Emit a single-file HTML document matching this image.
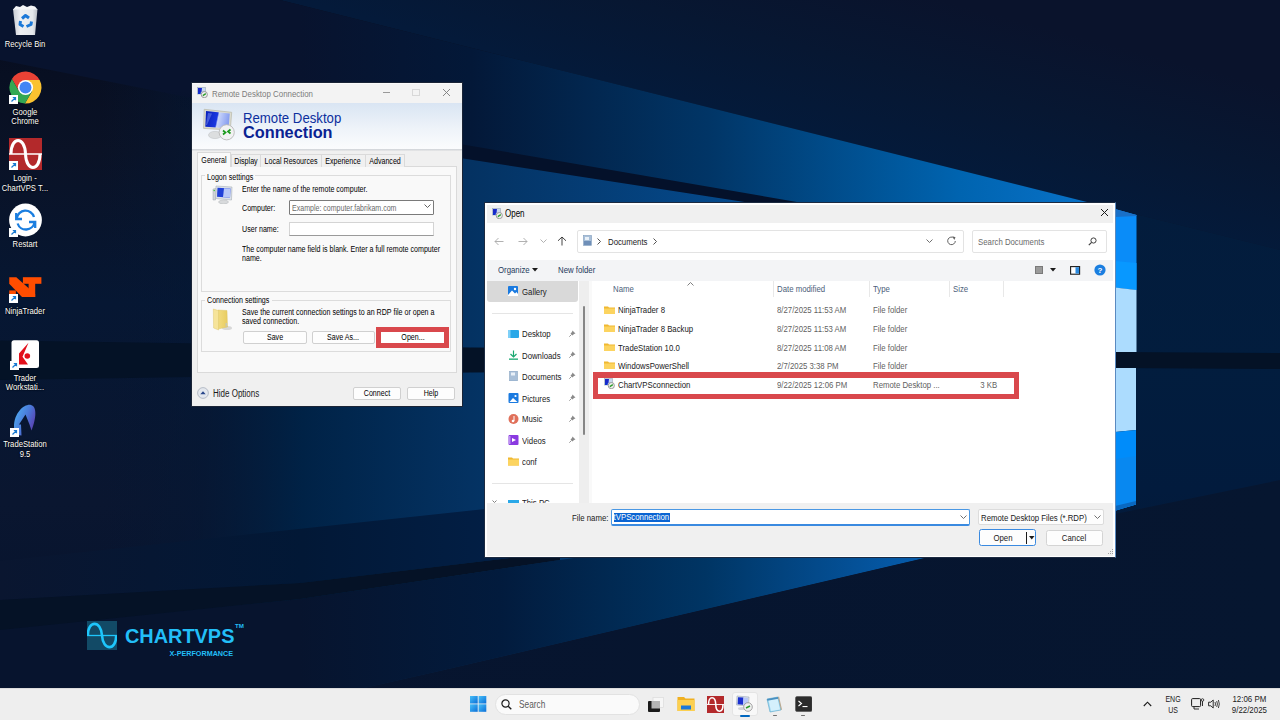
<!DOCTYPE html>
<html><head><meta charset="utf-8"><style>
html,body{margin:0;padding:0;width:1280px;height:720px;overflow:hidden;background:#08122a;}
body{position:relative;font-family:"Liberation Sans",sans-serif;}
.t{position:absolute;white-space:nowrap;}
.r{position:absolute;box-sizing:border-box;}
.dl{color:#fff;text-shadow:0 0 2px #000,0 1px 1px #000;text-align:center;width:56px;}
</style></head><body>

<svg class="r" style="left:0;top:0" width="1280" height="720" viewBox="0 0 1280 720">
<defs>
<linearGradient id="gBase" x1="0" y1="0" x2="0" y2="1">
 <stop offset="0" stop-color="#060c1e"/><stop offset="0.21" stop-color="#0a1226"/><stop offset="0.42" stop-color="#061733"/><stop offset="0.7" stop-color="#0a1630"/><stop offset="0.86" stop-color="#07142e"/><stop offset="1" stop-color="#061630"/>
</linearGradient>
<linearGradient id="gUp" gradientUnits="userSpaceOnUse" x1="300" y1="0" x2="1115" y2="0">
 <stop offset="0" stop-color="#08132e"/><stop offset="0.21" stop-color="#031838"/><stop offset="0.5" stop-color="#013566"/><stop offset="0.81" stop-color="#0064b0"/><stop offset="1" stop-color="#0a74cc"/>
</linearGradient>
<linearGradient id="gMid" gradientUnits="userSpaceOnUse" x1="100" y1="0" x2="1115" y2="0">
 <stop offset="0" stop-color="#061733" stop-opacity="0"/><stop offset="0.1" stop-color="#051835" stop-opacity="0.6"/><stop offset="0.2" stop-color="#002246"/><stop offset="0.365" stop-color="#043262"/><stop offset="0.78" stop-color="#0558a5"/><stop offset="1" stop-color="#0a6cc0"/>
</linearGradient>
<linearGradient id="gRight" x1="0" y1="0" x2="0" y2="1">
 <stop offset="0" stop-color="#031c3c"/><stop offset="0.3" stop-color="#021d3e"/><stop offset="0.55" stop-color="#021b3d"/><stop offset="1" stop-color="#061630"/>
</linearGradient>
<linearGradient id="gBB2" gradientUnits="userSpaceOnUse" x1="0" y1="0" x2="560" y2="0">
 <stop offset="0" stop-color="#0a1630"/><stop offset="0.54" stop-color="#021836"/><stop offset="1" stop-color="#02214a"/>
</linearGradient>
<linearGradient id="gLow" gradientUnits="userSpaceOnUse" x1="300" y1="0" x2="1000" y2="0">
 <stop offset="0" stop-color="#07142e"/><stop offset="0.286" stop-color="#021b3d"/><stop offset="0.58" stop-color="#003564"/><stop offset="0.85" stop-color="#0558a5"/><stop offset="1" stop-color="#0a64b8"/>
</linearGradient>
<linearGradient id="gBot" x1="0" y1="0" x2="1" y2="0">
 <stop offset="0" stop-color="#07142e"/><stop offset="1" stop-color="#061630"/>
</linearGradient>
<linearGradient id="gS1" gradientUnits="userSpaceOnUse" x1="150" y1="0" x2="460" y2="0">
 <stop offset="0" stop-color="#04112a" stop-opacity="0"/><stop offset="1" stop-color="#04112a" stop-opacity="1"/>
</linearGradient>
<linearGradient id="gAbove" gradientUnits="userSpaceOnUse" x1="900" y1="155" x2="940" y2="0">
 <stop offset="0" stop-color="#041a3a"/><stop offset="0.5" stop-color="#071732"/><stop offset="1" stop-color="#0a132c"/>
</linearGradient>
</defs>
<rect x="0" y="0" width="1280" height="720" fill="url(#gBase)"/>
<!-- above T line tint -->
<polygon points="280,0 1280,0 1280,250 1115,209" fill="url(#gAbove)"/>
<!-- right area below T line -->
<polygon points="1115,209 1280,250 1280,720 1115,720" fill="url(#gRight)"/>
<!-- middle + lower beam -->
<polygon points="0,40 460,151 1115,258 1115,514 929,557 440,671 0,770" fill="url(#gMid)"/>
<!-- upper beam -->
<polygon points="280,0 1115,209 1115,258 460,151 0,60 0,0" fill="url(#gUp)"/>
<!-- stripe 1 -->
<polygon points="0,58 460,144 1115,256.7 1115,259.5 460,158 0,75" fill="url(#gS1)"/>
<!-- region between B and B2 (left) -->
<polygon points="0,561 485,509 560,500 560,552 300,583 0,600" fill="url(#gBB2)"/>
<!-- region below B2 above B3 -->
<polygon points="0,630 300,599 560,560 1115,480 1115,514 929,557 440,671 0,770" fill="url(#gLow)"/>
<!-- B2 dark stripe -->
<polygon points="0,600 300,583 560,552 560,560 300,599 0,630" fill="#051226"/>
<!-- below B3 -->
<polygon points="440,671 929,557 1115,514 1280,480 1280,720 0,720 0,770" fill="url(#gBot)"/>
<!-- stripe 2 (window bar shadow) -->
<polygon points="0,340.5 470,347.5 1115,352 1280,353 1280,369 1115,368 470,372.5 0,380" fill="#041226"/>
<!-- window panes right column -->
<polygon points="1115,209 1136.5,215 1136.5,290 1115,287.5" fill="#0a8cf8"/>
<polygon points="1115,209 1136.5,215 1136.5,216 1115,217" fill="#1a70c8"/>
<polygon points="1115,261 1136.5,263 1136.5,290 1115,287.5" fill="#0898ff"/>
<polygon points="1115,287.5 1136.5,290 1136.5,352 1115,352" fill="#acdcfe"/>
<polygon points="1115,368 1136,368 1136,430 1115,432" fill="#acdcfe"/>
<polygon points="1115,432 1136,430 1136,504.5 1115,510.7" fill="#008cfa"/>
<polygon points="1115,459 1136,456 1136,504.5 1115,510.7" fill="#0888f0"/>
<polygon points="1115,506 1136,501 1136,504.5 1115,510.7" fill="#0a68c0"/>
</svg>

<svg class="r" style="left:8px;top:2px;" width="36" height="36" viewBox="0 0 36 36"><defs><linearGradient id="gbin" x1="0" y1="0" x2="1" y2="0"><stop offset="0" stop-color="#c8ccd2"/><stop offset="0.3" stop-color="#eef0f3"/><stop offset="0.8" stop-color="#e4e8ec"/><stop offset="1" stop-color="#b8bcc4"/></linearGradient></defs>
<path d="M5 7 L29.5 7 L27 33 L8 33Z" fill="url(#gbin)"/>
<path d="M5 7.5 L8 4 L12 5 L15 3 L19 5 L23 3.5 L27 4.5 L29.5 7.5Z" fill="#f4f6f8"/>
<g fill="none" stroke="#1a78d8" stroke-width="3" stroke-linejoin="round"><path d="M14 16.5 L17.5 13.5 L21 16"/><path d="M12.5 19 L12 22.5 L15.5 24.5"/><path d="M18.5 24.5 L23 22.5 L23.5 19.5"/></g></svg>
<div class="t" style="left:25px;transform:translateX(-50%) scaleX(0.8000);transform-origin:50% 50%;top:39.45px;font-size:9.62px;line-height:9.62px;color:#fff;font-weight:400;text-shadow:0 0 2px #000,0 0 1px #000;">Recycle Bin</div>
<svg class="r" style="left:9px;top:71px;" width="33" height="33" viewBox="0 0 33 33"><path d="M2.94 8.01 A16 16 0 0 1 30.63 9 L16.5 9 L16.5 16.5 L10 20.25 Z" fill="#e94235"/>
<path d="M30.63 9 A16 16 0 0 1 15.93 32.49 L23 20.25 L16.5 16.5 L16.5 9 Z" fill="#fac230"/>
<path d="M15.93 32.49 A16 16 0 0 1 2.94 8.01 L10 20.25 L16.5 16.5 L23 20.25 Z" fill="#34a853"/>
<circle cx="16.5" cy="16.5" r="7.6" fill="#fff"/><circle cx="16.5" cy="16.5" r="6" fill="#4285f4"/></svg>
<svg class="r" style="left:9px;top:95px;" width="9" height="9" viewBox="0 0 9 9"><rect x="0" y="0" width="9" height="9" fill="#fff"/><path d="M2.5 6.5 L6.5 2.5 M3.8 2.5 H6.5 V5.2" stroke="#1a7ad0" stroke-width="1.2" fill="none"/></svg>
<div class="t" style="left:25px;transform:translateX(-50%) scaleX(0.8000);transform-origin:50% 50%;top:106.85px;font-size:9.62px;line-height:9.62px;color:#fff;font-weight:400;text-shadow:0 0 2px #000,0 0 1px #000;">Google</div>
<div class="t" style="left:25px;transform:translateX(-50%) scaleX(0.8000);transform-origin:50% 50%;top:115.65px;font-size:9.62px;line-height:9.62px;color:#fff;font-weight:400;text-shadow:0 0 2px #000,0 0 1px #000;">Chrome</div>
<svg class="r" style="left:9px;top:138px;" width="33" height="32" viewBox="0 0 33 32"><rect width="33" height="32" fill="#b3292b"/>
<path d="M2 16 C2 -2 16 -2 16.5 16 C17 34 31 34 31 16" stroke="#fff" stroke-width="3" fill="none"/>
<line x1="0" y1="16" x2="33" y2="16" stroke="#fff" stroke-width="1.6"/></svg>
<svg class="r" style="left:9px;top:161px;" width="9" height="9" viewBox="0 0 9 9"><rect x="0" y="0" width="9" height="9" fill="#fff"/><path d="M2.5 6.5 L6.5 2.5 M3.8 2.5 H6.5 V5.2" stroke="#1a7ad0" stroke-width="1.2" fill="none"/></svg>
<div class="t" style="left:25px;transform:translateX(-50%) scaleX(0.8000);transform-origin:50% 50%;top:173.45px;font-size:9.62px;line-height:9.62px;color:#fff;font-weight:400;text-shadow:0 0 2px #000,0 0 1px #000;">Login -</div>
<div class="t" style="left:25px;transform:translateX(-50%) scaleX(0.8000);transform-origin:50% 50%;top:183.35px;font-size:9.62px;line-height:9.62px;color:#fff;font-weight:400;text-shadow:0 0 2px #000,0 0 1px #000;">ChartVPS T...</div>
<svg class="r" style="left:5px;top:200px;" width="40" height="40" viewBox="0 0 40 40"><circle cx="20.5" cy="20" r="16.4" fill="#fff"/>
<g stroke="#1a7ee0" stroke-width="2.3" fill="none"><path d="M11.8 18.5 A8.8 8.8 0 0 1 29 17"/><path d="M11.2 13 V19 H17"/><path d="M12.6 23.5 A8.8 8.8 0 0 0 29.6 22.3"/><path d="M24 22 H30.2 V28"/></g></svg>
<svg class="r" style="left:9px;top:228px;" width="9" height="9" viewBox="0 0 9 9"><rect x="0" y="0" width="9" height="9" fill="#fff"/><path d="M2.5 6.5 L6.5 2.5 M3.8 2.5 H6.5 V5.2" stroke="#1a7ad0" stroke-width="1.2" fill="none"/></svg>
<div class="t" style="left:25px;transform:translateX(-50%) scaleX(0.8000);transform-origin:50% 50%;top:239.35px;font-size:9.62px;line-height:9.62px;color:#fff;font-weight:400;text-shadow:0 0 2px #000,0 0 1px #000;">Restart</div>
<svg class="r" style="left:5px;top:272px;" width="40" height="34" viewBox="0 0 40 34"><g fill="#ff4d00"><path d="M4.25 5.2 L11.3 5.2 L30.2 21.9 L30.2 25 L17 25 L4.25 11.8Z"/><rect x="17.9" y="5.2" width="18.5" height="6.6"/><rect x="23.6" y="11" width="6.6" height="14"/><rect x="4.25" y="18.4" width="6.6" height="3.8"/></g></svg>
<svg class="r" style="left:9px;top:294px;" width="9" height="9" viewBox="0 0 9 9"><rect x="0" y="0" width="9" height="9" fill="#fff"/><path d="M2.5 6.5 L6.5 2.5 M3.8 2.5 H6.5 V5.2" stroke="#1a7ad0" stroke-width="1.2" fill="none"/></svg>
<div class="t" style="left:25px;transform:translateX(-50%) scaleX(0.8000);transform-origin:50% 50%;top:306.15px;font-size:9.62px;line-height:9.62px;color:#fff;font-weight:400;text-shadow:0 0 2px #000,0 0 1px #000;">NinjaTrader</div>
<svg class="r" style="left:5px;top:336px;" width="40" height="36" viewBox="0 0 40 36"><rect x="6.5" y="4.25" width="27.5" height="27.75" rx="2.5" fill="#fff"/>
<path d="M23.5 6.75 L14 17.5 L14 28.5 L23 28.5 L17.5 20.75Z" fill="#e2101c"/><circle cx="22.3" cy="20" r="3.4" fill="#fff"/><circle cx="22.3" cy="20" r="2.8" fill="#e2101c"/></svg>
<svg class="r" style="left:9.5px;top:361px;" width="9" height="9" viewBox="0 0 9 9"><rect x="0" y="0" width="9" height="9" fill="#fff"/><path d="M2.5 6.5 L6.5 2.5 M3.8 2.5 H6.5 V5.2" stroke="#1a7ad0" stroke-width="1.2" fill="none"/></svg>
<div class="t" style="left:25px;transform:translateX(-50%) scaleX(0.8000);transform-origin:50% 50%;top:372.85px;font-size:9.62px;line-height:9.62px;color:#fff;font-weight:400;text-shadow:0 0 2px #000,0 0 1px #000;">Trader</div>
<div class="t" style="left:25px;transform:translateX(-50%) scaleX(0.8000);transform-origin:50% 50%;top:382.25px;font-size:9.62px;line-height:9.62px;color:#fff;font-weight:400;text-shadow:0 0 2px #000,0 0 1px #000;">Workstati...</div>
<svg class="r" style="left:5px;top:400px;" width="40" height="40" viewBox="0 0 40 40"><defs><linearGradient id="gts" x1="0" y1="0" x2="1" y2="0.6"><stop offset="0" stop-color="#50b8f8"/><stop offset="0.6" stop-color="#4a78d8"/><stop offset="1" stop-color="#5a40b0"/></linearGradient></defs>
<path d="M9 27 C9 12 20 3.5 26 5 C32 6.5 31.5 18 26.5 30.5 L24.5 24.5 L20.5 14.5 L14 24.5 L16 24.5 L16.5 35.5 L12.5 35 C10 33 9 30 9 27Z" fill="url(#gts)"/></svg>
<svg class="r" style="left:9.5px;top:428px;" width="9" height="9" viewBox="0 0 9 9"><rect x="0" y="0" width="9" height="9" fill="#fff"/><path d="M2.5 6.5 L6.5 2.5 M3.8 2.5 H6.5 V5.2" stroke="#1a7ad0" stroke-width="1.2" fill="none"/></svg>
<div class="t" style="left:25px;transform:translateX(-50%) scaleX(0.8000);transform-origin:50% 50%;top:439.15px;font-size:9.62px;line-height:9.62px;color:#fff;font-weight:400;text-shadow:0 0 2px #000,0 0 1px #000;">TradeStation</div>
<div class="t" style="left:25px;transform:translateX(-50%) scaleX(0.8000);transform-origin:50% 50%;top:449.15px;font-size:9.62px;line-height:9.62px;color:#fff;font-weight:400;text-shadow:0 0 2px #000,0 0 1px #000;">9.5</div>
<svg class="r" style="left:87px;top:621px;" width="30" height="29" viewBox="0 0 30 29"><rect width="30" height="29" fill="#124a66"/>
<path d="M0.8 14.5 C0.8 -1 14 -1 15 14.5 C16 30 29.2 30 29.2 14.5" stroke="#1ec6fc" stroke-width="2.6" fill="none"/>
<line x1="0" y1="14.5" x2="30" y2="14.5" stroke="#1ec6fc" stroke-width="1.3"/></svg>
<div class="t" style="left:125px;transform:scaleX(1.0000);transform-origin:0 50%;top:627.15px;font-size:19.90px;line-height:19.90px;color:#22bff8;font-weight:700;">CHARTVPS</div>
<div class="t" style="left:235px;transform:scaleX(1.0000);transform-origin:0 50%;top:623.25px;font-size:6.20px;line-height:6.20px;color:#22bff8;font-weight:700;">TM</div>
<div class="t" style="left:169.5px;transform:scaleX(1.0000);transform-origin:0 50%;top:650.41px;font-size:7.20px;line-height:7.20px;color:#22bff8;font-weight:700;">X-PERFORMANCE</div>
<div class="r" style="left:191px;top:82px;width:272px;height:325px;background:#f0f0f0;border:1px solid #1a2436;"></div>
<div class="r" style="left:192px;top:83px;width:270px;height:20px;background:#f3f3f3;border-top:1px solid #fafafa;"></div>
<svg class="r" style="left:197px;top:87px;" width="11" height="11" viewBox="0 0 11 11"><rect x="0.5" y="0.5" width="8" height="6.5" fill="#c8d8f0" stroke="#9aa8b8" stroke-width="0.6"/>
<path d="M1 1 H5 L3.5 7 H1Z" fill="#1030d0"/><rect x="1" y="1" width="3.5" height="4" fill="#1a28c8"/>
<circle cx="7.3" cy="7.6" r="3.1" fill="#f0f0f0" stroke="#888" stroke-width="0.8"/><path d="M5.8 8.6 L8.8 6.6" stroke="#2a9a2a" stroke-width="1.4"/></svg>
<div class="t" style="left:211.5px;transform:scaleX(0.8000);transform-origin:0 50%;top:88.84px;font-size:9.88px;line-height:9.88px;color:#7c7c7c;font-weight:400;">Remote Desktop Connection</div>
<div class="r" style="left:382.5px;top:92.3px;width:7.0px;height:1.0px;background:#9a9a9a;"></div>
<div class="r" style="left:412px;top:89px;width:8px;height:7px;border:1px solid #d8d8d8;"></div>
<svg class="r" style="left:442px;top:88px;" width="9" height="9" viewBox="0 0 9 9"><path d="M1 1 L8 8 M8 1 L1 8" stroke="#7a7a7a" stroke-width="0.9"/></svg>
<div class="r" style="left:192px;top:103px;width:270px;height:46px;background:linear-gradient(#d9e5f3,#eef3f9 55%,#fbfcfd);"></div>
<div class="r" style="left:192px;top:149px;width:270px;height:2px;background:linear-gradient(#cfd3d8,#e8e8e8);"></div>
<svg class="r" style="left:200px;top:104px;" width="40" height="40" viewBox="0 0 40 40"><defs><linearGradient id="gscr" x1="0" y1="0" x2="1" y2="0.15"><stop offset="0" stop-color="#0a20b8"/><stop offset="0.52" stop-color="#1a38e0"/><stop offset="0.58" stop-color="#c8d4fa"/><stop offset="1" stop-color="#8aa0f0"/></linearGradient></defs>
<ellipse cx="15" cy="31" rx="6.5" ry="3.6" fill="#dcdedf" stroke="#c0c2c4" stroke-width="0.6"/>
<path d="M4.2 5.3 L31.7 8.3 L30.3 26 L3.6 24.4 Z" fill="#dcdcd0" stroke="#b8b8a8" stroke-width="0.7"/>
<path d="M6 7 L29.8 9.6 L28.6 24.3 L5.3 22.8 Z" fill="url(#gscr)"/>
<path d="M8 9 L12 9.5 L7 21 L6 21Z" fill="#6a80e8" opacity="0.6"/>
<circle cx="26.7" cy="28.3" r="7.6" fill="#f2f2f2" stroke="#b8b8b8" stroke-width="0.9"/>
<path d="M23 26.5 L25.5 28.5 L23 30.5" stroke="#1a9a1a" stroke-width="1.7" fill="none"/><path d="M30.5 25.5 L28 27.5 L30.5 29.5" stroke="#1a9a1a" stroke-width="1.7" fill="none"/></svg>
<div class="t" style="left:243px;transform:scaleX(0.9259);transform-origin:0 50%;top:111.13px;font-size:14.26px;line-height:14.26px;color:#0c2f9e;font-weight:400;">Remote Desktop</div>
<div class="t" style="left:243px;transform:scaleX(1.0000);transform-origin:0 50%;top:124.40px;font-size:16.30px;line-height:16.30px;color:#0a2292;font-weight:700;">Connection</div>
<div class="r" style="left:197px;top:166px;width:260px;height:207px;background:#f9f9f9;border:1px solid #dadada;"></div>
<div class="r" style="left:230.5px;top:154px;width:30.5px;height:13px;background:#f0f0f0;border:1px solid #dadada;border-bottom:none;"></div>
<div class="t" style="left:245.75px;transform:translateX(-50%) scaleX(0.8000);transform-origin:50% 50%;top:156.69px;font-size:8.88px;line-height:8.88px;color:#000;font-weight:400;">Display</div>
<div class="r" style="left:260px;top:154px;width:62px;height:13px;background:#f0f0f0;border:1px solid #dadada;border-bottom:none;"></div>
<div class="t" style="left:291.0px;transform:translateX(-50%) scaleX(0.8000);transform-origin:50% 50%;top:156.69px;font-size:8.88px;line-height:8.88px;color:#000;font-weight:400;">Local Resources</div>
<div class="r" style="left:321px;top:154px;width:44.5px;height:13px;background:#f0f0f0;border:1px solid #dadada;border-bottom:none;"></div>
<div class="t" style="left:343.25px;transform:translateX(-50%) scaleX(0.8000);transform-origin:50% 50%;top:156.69px;font-size:8.88px;line-height:8.88px;color:#000;font-weight:400;">Experience</div>
<div class="r" style="left:364.5px;top:154px;width:40.5px;height:13px;background:#f0f0f0;border:1px solid #dadada;border-bottom:none;"></div>
<div class="t" style="left:384.75px;transform:translateX(-50%) scaleX(0.8000);transform-origin:50% 50%;top:156.69px;font-size:8.88px;line-height:8.88px;color:#000;font-weight:400;">Advanced</div>
<div class="r" style="left:197px;top:152px;width:34px;height:15px;background:#f9f9f9;border:1px solid #dadada;border-bottom:none;"></div>
<div class="t" style="left:214px;transform:translateX(-50%) scaleX(0.8000);transform-origin:50% 50%;top:155.69px;font-size:8.88px;line-height:8.88px;color:#000;font-weight:400;">General</div>
<div class="r" style="left:201px;top:175px;width:250px;height:117px;border:1px solid #dcdcdc;"></div>
<div class="r" style="left:205px;top:171px;width:50px;height:7px;background:#f9f9f9;"></div>
<div class="t" style="left:206.5px;transform:scaleX(0.8000);transform-origin:0 50%;top:172.69px;font-size:8.88px;line-height:8.88px;color:#000;font-weight:400;">Logon settings</div>
<svg class="r" style="left:212px;top:185px;" width="21" height="19" viewBox="0 0 21 19"><path d="M4 1 L20 2 L19.5 15 L3.5 13.5 Z" fill="#dde2e8" stroke="#a8b0b8" stroke-width="0.6"/>
<path d="M5.5 2.8 L18.5 3.6 L18 12.8 L5 11.8 Z" fill="#2040d8"/><path d="M12 3.3 L18.5 3.6 L18 12.8 L11 12.2Z" fill="#b8c8f8"/>
<path d="M1 4 L4 3.5 L3.5 15 L1 15Z" fill="#d0d4d8" stroke="#a0a8b0" stroke-width="0.5"/><circle cx="2.2" cy="5.5" r="0.7" fill="#30c030"/>
<ellipse cx="11.5" cy="17" rx="5" ry="1.8" fill="#d8dadc" stroke="#b0b4b8" stroke-width="0.5"/></svg>
<div class="t" style="left:242px;transform:scaleX(0.8000);transform-origin:0 50%;top:185.39px;font-size:8.88px;line-height:8.88px;color:#000;font-weight:400;">Enter the name of the remote computer.</div>
<div class="t" style="left:242px;transform:scaleX(0.8000);transform-origin:0 50%;top:204.19px;font-size:8.88px;line-height:8.88px;color:#000;font-weight:400;">Computer:</div>
<div class="r" style="left:288.5px;top:200px;width:145.5px;height:14.5px;background:#fff;border:1px solid #7a7a7a;border-radius:1px;"></div>
<div class="t" style="left:291.5px;transform:scaleX(0.8000);transform-origin:0 50%;top:204.04px;font-size:8.81px;line-height:8.81px;color:#6a6a6a;font-weight:400;">Example: computer.fabrikam.com</div>
<svg class="r" style="left:424px;top:204px;" width="7" height="5" viewBox="0 0 7 5"><path d="M0.5 0.5 L3.5 3.5 L6.5 0.5" stroke="#505050" stroke-width="0.9" fill="none"/></svg>
<div class="t" style="left:242px;transform:scaleX(0.8000);transform-origin:0 50%;top:225.19px;font-size:8.88px;line-height:8.88px;color:#000;font-weight:400;">User name:</div>
<div class="r" style="left:289px;top:222px;width:145px;height:14px;background:#fff;border:1px solid #d4d4d4;border-bottom-color:#9a9a9a;"></div>
<div class="t" style="left:242px;transform:scaleX(0.8000);transform-origin:0 50%;top:245.09px;font-size:8.88px;line-height:8.88px;color:#000;font-weight:400;">The computer name field is blank. Enter a full remote computer</div>
<div class="t" style="left:242px;transform:scaleX(0.8000);transform-origin:0 50%;top:253.59px;font-size:8.88px;line-height:8.88px;color:#000;font-weight:400;">name.</div>
<div class="r" style="left:201px;top:300px;width:250px;height:51.5px;border:1px solid #dcdcdc;"></div>
<div class="r" style="left:205px;top:296px;width:67px;height:7px;background:#f9f9f9;"></div>
<div class="t" style="left:206.5px;transform:scaleX(0.8000);transform-origin:0 50%;top:296.39px;font-size:8.88px;line-height:8.88px;color:#000;font-weight:400;">Connection settings</div>
<svg class="r" style="left:210px;top:306px;" width="24" height="26" viewBox="0 0 24 26"><defs><linearGradient id="gfold" x1="0" y1="0" x2="1" y2="0"><stop offset="0" stop-color="#f2dc80"/><stop offset="1" stop-color="#e8cc60"/></linearGradient></defs>
<ellipse cx="17" cy="22" rx="5" ry="2" fill="#b8b8b8" opacity="0.5"/>
<path d="M8 4 L17 4.5 L17.5 21 L8 23Z" fill="url(#gfold)" stroke="#d8c060" stroke-width="0.4"/>
<path d="M3.3 3 L8.6 4.6 L8.6 24 L3.6 22Z" fill="#f6e49a" stroke="#d8c060" stroke-width="0.4"/>
<rect x="15.5" y="17" width="1.6" height="3.5" fill="#c8c8b0"/></svg>
<div class="t" style="left:242px;transform:scaleX(0.8000);transform-origin:0 50%;top:308.39px;font-size:8.88px;line-height:8.88px;color:#000;font-weight:400;">Save the current connection settings to an RDP file or open a</div>
<div class="t" style="left:242px;transform:scaleX(0.8000);transform-origin:0 50%;top:317.19px;font-size:8.88px;line-height:8.88px;color:#000;font-weight:400;">saved connection.</div>
<div class="r" style="left:242.5px;top:330.5px;width:64.5px;height:13.5px;background:#fdfdfd;border:1px solid #d0d0d0;border-radius:2px;"></div>
<div class="t" style="left:274.75px;transform:translateX(-50%) scaleX(0.8000);transform-origin:50% 50%;top:332.89px;font-size:8.88px;line-height:8.88px;color:#000;font-weight:400;">Save</div>
<div class="r" style="left:311.5px;top:330.5px;width:63.5px;height:13.5px;background:#fdfdfd;border:1px solid #d0d0d0;border-radius:2px;"></div>
<div class="t" style="left:343.25px;transform:translateX(-50%) scaleX(0.8000);transform-origin:50% 50%;top:332.89px;font-size:8.88px;line-height:8.88px;color:#000;font-weight:400;">Save As...</div>
<div class="r" style="left:375.8px;top:327px;width:73.5px;height:21.30000000000001px;background:#d9484c;"></div>
<div class="r" style="left:381px;top:332.3px;width:63px;height:10.899999999999977px;background:#fff;"></div>
<div class="t" style="left:412.5px;transform:translateX(-50%) scaleX(0.8000);transform-origin:50% 50%;top:332.89px;font-size:8.88px;line-height:8.88px;color:#000;font-weight:400;">Open...</div>
<svg class="r" style="left:197px;top:387px;" width="12" height="12" viewBox="0 0 12 12"><circle cx="6" cy="6" r="5.4" fill="#e4e8ee" stroke="#a8b0bc" stroke-width="0.8"/><path d="M3.3 7.3 L6 4.3 L8.7 7.3Z" fill="#28468a"/></svg>
<div class="t" style="left:213px;transform:scaleX(0.8000);transform-origin:0 50%;top:388.74px;font-size:10.00px;line-height:10.00px;color:#1a1a1a;font-weight:400;">Hide Options</div>
<div class="r" style="left:352.5px;top:386.5px;width:48.0px;height:13.5px;background:#fdfdfd;border:1px solid #d0d0d0;border-radius:2px;"></div>
<div class="t" style="left:376.5px;transform:translateX(-50%) scaleX(0.8000);transform-origin:50% 50%;top:389.19px;font-size:8.88px;line-height:8.88px;color:#000;font-weight:400;">Connect</div>
<div class="r" style="left:406.5px;top:386.5px;width:48.0px;height:13.5px;background:#fdfdfd;border:1px solid #d0d0d0;border-radius:2px;"></div>
<div class="t" style="left:430.5px;transform:translateX(-50%) scaleX(0.8000);transform-origin:50% 50%;top:389.19px;font-size:8.88px;line-height:8.88px;color:#000;font-weight:400;">Help</div>
<div class="r" style="left:484px;top:202px;width:632px;height:356px;background:#fff;border:1px solid #1c2a40;border-right-color:#5a8ac0;"></div>
<div class="r" style="left:487px;top:205px;width:626px;height:18px;background:#f0f0f0;"></div>
<svg class="r" style="left:492px;top:208px;" width="11" height="11" viewBox="0 0 11 11"><rect x="0.5" y="0.5" width="8" height="6.5" fill="#c8d8f0" stroke="#9aa8b8" stroke-width="0.6"/>
<path d="M1 1 H5 L3.5 7 H1Z" fill="#1030d0"/><rect x="1" y="1" width="3.5" height="4" fill="#1a28c8"/>
<circle cx="7.3" cy="7.6" r="3.1" fill="#f0f0f0" stroke="#888" stroke-width="0.8"/><path d="M5.8 8.6 L8.8 6.6" stroke="#2a9a2a" stroke-width="1.4"/></svg>
<div class="t" style="left:505.3px;transform:scaleX(0.8000);transform-origin:0 50%;top:208.63px;font-size:10.00px;line-height:10.00px;color:#000;font-weight:400;">Open</div>
<svg class="r" style="left:1100px;top:208px;" width="9" height="9" viewBox="0 0 9 9"><path d="M1 1 L8 8 M8 1 L1 8" stroke="#1a1a1a" stroke-width="1"/></svg>
<svg class="r" style="left:494px;top:237px;" width="10" height="9" viewBox="0 0 10 9"><path d="M9.5 4.5 H1 M4.5 1 L1 4.5 L4.5 8" stroke="#a8a8a8" stroke-width="0.9" fill="none"/></svg>
<svg class="r" style="left:518px;top:237px;" width="10" height="9" viewBox="0 0 10 9"><path d="M0.5 4.5 H9 M5.5 1 L9 4.5 L5.5 8" stroke="#a8a8a8" stroke-width="0.9" fill="none"/></svg>
<svg class="r" style="left:540px;top:239px;" width="7" height="5" viewBox="0 0 7 5"><path d="M0.5 0.5 L3.5 3.5 L6.5 0.5" stroke="#a8a8a8" stroke-width="0.9" fill="none"/></svg>
<svg class="r" style="left:557px;top:236px;" width="10" height="10" viewBox="0 0 10 10"><path d="M5 9.5 V1 M1 4.8 L5 1 L9 4.8" stroke="#303030" stroke-width="0.9" fill="none"/></svg>
<div class="r" style="left:577px;top:230px;width:387px;height:23px;background:#fff;border:1px solid #e3e3e3;border-radius:2px;"></div>
<svg class="r" style="left:583px;top:235px;" width="9" height="11" viewBox="0 0 9 11"><rect x="0.5" y="0.5" width="8" height="10" fill="#a8bfd8" stroke="#7f9cbc" stroke-width="0.6"/><rect x="2" y="2" width="4" height="3" fill="#e8f0f8"/><rect x="1" y="6" width="7" height="4" fill="#6f8fb8"/></svg>
<svg class="r" style="left:596px;top:238px;" width="6" height="7" viewBox="0 0 6 7"><path d="M1.5 0.5 L4.5 3.5 L1.5 6.5" stroke="#404040" stroke-width="0.9" fill="none"/></svg>
<div class="t" style="left:607.5px;transform:scaleX(0.8000);transform-origin:0 50%;top:236.75px;font-size:9.75px;line-height:9.75px;color:#1a1a1a;font-weight:400;">Documents</div>
<svg class="r" style="left:652px;top:238px;" width="6" height="7" viewBox="0 0 6 7"><path d="M1.5 0.5 L4.5 3.5 L1.5 6.5" stroke="#404040" stroke-width="0.9" fill="none"/></svg>
<svg class="r" style="left:926px;top:239px;" width="7" height="5" viewBox="0 0 7 5"><path d="M0.5 0.5 L3.5 3.5 L6.5 0.5" stroke="#606060" stroke-width="0.9" fill="none"/></svg>
<svg class="r" style="left:947px;top:236px;" width="10" height="10" viewBox="0 0 10 10"><path d="M8.3 5 A3.8 3.8 0 1 1 7 2" stroke="#606060" stroke-width="1" fill="none"/><path d="M5.5 0.3 L8.5 1.2 L7.3 4Z" fill="#606060"/></svg>
<div class="r" style="left:972px;top:230px;width:135px;height:23px;background:#fff;border:1px solid #e3e3e3;border-radius:2px;"></div>
<div class="t" style="left:978px;transform:scaleX(0.8000);transform-origin:0 50%;top:236.95px;font-size:9.75px;line-height:9.75px;color:#6a6a6a;font-weight:400;">Search Documents</div>
<svg class="r" style="left:1088px;top:237px;" width="9" height="9" viewBox="0 0 9 9"><circle cx="5.5" cy="3.5" r="2.6" stroke="#404040" stroke-width="1" fill="none"/><path d="M3.6 5.4 L0.8 8.2" stroke="#404040" stroke-width="1.2"/></svg>
<div class="r" style="left:487px;top:259.5px;width:626px;height:21.5px;background:#f3f4f6;"></div>
<div class="t" style="left:497.5px;transform:scaleX(0.8000);transform-origin:0 50%;top:265.35px;font-size:9.75px;line-height:9.75px;color:#1e3a5c;font-weight:400;">Organize</div>
<svg class="r" style="left:532px;top:268px;" width="6" height="4" viewBox="0 0 6 4"><path d="M0 0 H6 L3 3.5Z" fill="#1a1a1a"/></svg>
<div class="t" style="left:558px;transform:scaleX(0.8000);transform-origin:0 50%;top:265.35px;font-size:9.75px;line-height:9.75px;color:#1e3a5c;font-weight:400;">New folder</div>
<div class="r" style="left:1034.5px;top:266px;width:8.5px;height:8px;background:#9a9a9a;border:1px solid #7a7a7a;"></div>
<svg class="r" style="left:1050px;top:268px;" width="6" height="4" viewBox="0 0 6 4"><path d="M0 0 H6 L3 3.5Z" fill="#1a1a1a"/></svg>
<svg class="r" style="left:1070px;top:265.5px;" width="11" height="9" viewBox="0 0 11 9"><rect x="0.6" y="0.6" width="9" height="7.6" fill="#fff" stroke="#1a1a1a" stroke-width="1.1"/><rect x="5.5" y="1.2" width="3.6" height="6.4" fill="#2a8ae0"/></svg>
<svg class="r" style="left:1093.5px;top:264px;" width="12" height="12" viewBox="0 0 12 12"><circle cx="6" cy="6" r="5.6" fill="#1a7ee0"/><text x="6" y="9" font-family="Liberation Sans" font-size="8" font-weight="700" fill="#fff" text-anchor="middle">?</text></svg>
<div class="r" style="left:487px;top:281px;width:90.5px;height:20.5px;background:#d9d9d9;border-radius:0 0 3px 3px;"></div>
<svg class="r" style="left:508px;top:286px;" width="11" height="10" viewBox="0 0 11 10"><rect x="0" y="0" width="10" height="10" rx="1" fill="#1a7ae0"/><path d="M0 9 L4 4.5 L7 7.5 L8.5 6 L10 8 V10 H0Z" fill="#fff"/><circle cx="7" cy="3" r="1.2" fill="#fff"/></svg>
<div class="t" style="left:522px;transform:scaleX(0.8000);transform-origin:0 50%;top:286.75px;font-size:9.75px;line-height:9.75px;color:#1a1a1a;font-weight:400;">Gallery</div>
<div class="r" style="left:492px;top:312.5px;width:81px;height:1.0px;background:#e5e5e5;"></div>
<svg class="r" style="left:508px;top:328.7px;" width="11" height="10" viewBox="0 0 11 10"><rect x="0" y="1" width="11" height="8" rx="1" fill="#2aa8e8"/><rect x="0" y="1" width="2.5" height="8" fill="#7fd0f8"/></svg>
<div class="t" style="left:522px;transform:scaleX(0.8000);transform-origin:0 50%;top:329.45px;font-size:9.75px;line-height:9.75px;color:#1a1a1a;font-weight:400;">Desktop</div>
<svg class="r" style="left:569px;top:329.7px;" width="7" height="7" viewBox="0 0 7 7"><path d="M3.5 0.5 L6.5 3.5 L5 4 L3.5 5.5 L1.5 3.5 L3 2Z" fill="#8a8a8a"/><path d="M2.5 4.5 L0.3 6.7" stroke="#8a8a8a" stroke-width="0.9"/></svg>
<svg class="r" style="left:508px;top:350px;" width="11" height="10" viewBox="0 0 11 10"><path d="M5.5 0.5 V7 M2.5 4 L5.5 7 L8.5 4" stroke="#18a870" stroke-width="1.2" fill="none"/><rect x="1" y="8.5" width="9" height="1.3" fill="#18a870"/></svg>
<div class="t" style="left:522px;transform:scaleX(0.8000);transform-origin:0 50%;top:350.75px;font-size:9.75px;line-height:9.75px;color:#1a1a1a;font-weight:400;">Downloads</div>
<svg class="r" style="left:569px;top:351px;" width="7" height="7" viewBox="0 0 7 7"><path d="M3.5 0.5 L6.5 3.5 L5 4 L3.5 5.5 L1.5 3.5 L3 2Z" fill="#8a8a8a"/><path d="M2.5 4.5 L0.3 6.7" stroke="#8a8a8a" stroke-width="0.9"/></svg>
<svg class="r" style="left:508px;top:371.2px;" width="11" height="10" viewBox="0 0 11 10"><rect x="1.5" y="0" width="8" height="10" fill="#a8bfd8" stroke="#7f9cbc" stroke-width="0.5"/><rect x="3" y="1.5" width="4" height="3" fill="#e8f0f8"/></svg>
<div class="t" style="left:522px;transform:scaleX(0.8000);transform-origin:0 50%;top:371.95px;font-size:9.75px;line-height:9.75px;color:#1a1a1a;font-weight:400;">Documents</div>
<svg class="r" style="left:569px;top:372.2px;" width="7" height="7" viewBox="0 0 7 7"><path d="M3.5 0.5 L6.5 3.5 L5 4 L3.5 5.5 L1.5 3.5 L3 2Z" fill="#8a8a8a"/><path d="M2.5 4.5 L0.3 6.7" stroke="#8a8a8a" stroke-width="0.9"/></svg>
<svg class="r" style="left:508px;top:392.8px;" width="11" height="10" viewBox="0 0 11 10"><rect x="0.5" y="0" width="10" height="10" rx="1" fill="#1a7ae0"/><path d="M1.5 9 L5 5 L9.5 9Z" fill="#fff"/><circle cx="7.5" cy="3" r="1.1" fill="#fff"/></svg>
<div class="t" style="left:522px;transform:scaleX(0.8000);transform-origin:0 50%;top:393.55px;font-size:9.75px;line-height:9.75px;color:#1a1a1a;font-weight:400;">Pictures</div>
<svg class="r" style="left:569px;top:393.8px;" width="7" height="7" viewBox="0 0 7 7"><path d="M3.5 0.5 L6.5 3.5 L5 4 L3.5 5.5 L1.5 3.5 L3 2Z" fill="#8a8a8a"/><path d="M2.5 4.5 L0.3 6.7" stroke="#8a8a8a" stroke-width="0.9"/></svg>
<svg class="r" style="left:508px;top:413.7px;" width="11" height="10" viewBox="0 0 11 10"><circle cx="5.5" cy="5" r="5" fill="#e0705a"/><path d="M6 2 V7" stroke="#fff" stroke-width="1"/><circle cx="5" cy="7" r="1.3" fill="#fff"/></svg>
<div class="t" style="left:522px;transform:scaleX(0.8000);transform-origin:0 50%;top:414.45px;font-size:9.75px;line-height:9.75px;color:#1a1a1a;font-weight:400;">Music</div>
<svg class="r" style="left:569px;top:414.7px;" width="7" height="7" viewBox="0 0 7 7"><path d="M3.5 0.5 L6.5 3.5 L5 4 L3.5 5.5 L1.5 3.5 L3 2Z" fill="#8a8a8a"/><path d="M2.5 4.5 L0.3 6.7" stroke="#8a8a8a" stroke-width="0.9"/></svg>
<svg class="r" style="left:508px;top:435px;" width="11" height="10" viewBox="0 0 11 10"><rect x="0.5" y="0" width="10" height="10" rx="1" fill="#8a3ae0"/><path d="M4 3 L8 5 L4 7Z" fill="#fff"/><rect x="1.2" y="1" width="1.2" height="8" fill="#c9a8f8"/></svg>
<div class="t" style="left:522px;transform:scaleX(0.8000);transform-origin:0 50%;top:435.75px;font-size:9.75px;line-height:9.75px;color:#1a1a1a;font-weight:400;">Videos</div>
<svg class="r" style="left:569px;top:436px;" width="7" height="7" viewBox="0 0 7 7"><path d="M3.5 0.5 L6.5 3.5 L5 4 L3.5 5.5 L1.5 3.5 L3 2Z" fill="#8a8a8a"/><path d="M2.5 4.5 L0.3 6.7" stroke="#8a8a8a" stroke-width="0.9"/></svg>
<svg class="r" style="left:508px;top:456px;" width="11" height="10" viewBox="0 0 11 10"><path d="M0 1.5 H4 L5 2.5 H11 V9.5 H0Z" fill="#f0b830"/><rect x="0" y="3.5" width="11" height="6" fill="#fcd460"/></svg>
<div class="t" style="left:522px;transform:scaleX(0.8000);transform-origin:0 50%;top:456.75px;font-size:9.75px;line-height:9.75px;color:#1a1a1a;font-weight:400;">conf</div>
<div class="r" style="left:492px;top:483px;width:81px;height:1px;background:#e5e5e5;"></div>
<div class="r" style="left:487px;top:495px;width:90px;height:8px;overflow:hidden">
<svg style="position:absolute;left:5px;top:5px" width="5" height="4"><path d="M0.5 0.5 L2.5 2.5 L4.5 0.5" stroke="#808080" fill="none"/></svg><div style="position:absolute;left:21px;top:5px;width:11px;height:8px;background:#2aa8e8"></div><div class="t" style="left:35px;top:3px;font-size:9.75px;line-height:9.75px;color:#1a1a1a;transform:scaleX(0.8);transform-origin:0 50%">This PC</div></div>
<div class="r" style="left:579px;top:281px;width:10px;height:222px;background:#eeeeee;"></div>
<div class="r" style="left:589px;top:281px;width:3px;height:222px;background:#f9f9f9;"></div>
<div class="r" style="left:582.5px;top:306px;width:2.5px;height:129px;background:#868686;border-radius:1px;"></div>
<div class="t" style="left:612.5px;transform:scaleX(0.8000);transform-origin:0 50%;top:284.45px;font-size:9.75px;line-height:9.75px;color:#4c607a;font-weight:400;">Name</div>
<svg class="r" style="left:687px;top:281.5px;" width="7" height="4" viewBox="0 0 7 4"><path d="M0.5 3.5 L3.5 0.5 L6.5 3.5" stroke="#707070" stroke-width="0.9" fill="none"/></svg>
<div class="r" style="left:773.2px;top:281px;width:1.0px;height:16px;background:#e8e8e8;"></div>
<div class="r" style="left:868.7px;top:281px;width:1.0px;height:16px;background:#e8e8e8;"></div>
<div class="r" style="left:948.9px;top:281px;width:1.0px;height:16px;background:#e8e8e8;"></div>
<div class="r" style="left:1002.7px;top:281px;width:1.0px;height:16px;background:#e8e8e8;"></div>
<div class="t" style="left:777.3px;transform:scaleX(0.8000);transform-origin:0 50%;top:284.45px;font-size:9.75px;line-height:9.75px;color:#4c607a;font-weight:400;">Date modified</div>
<div class="t" style="left:873.3px;transform:scaleX(0.8000);transform-origin:0 50%;top:284.45px;font-size:9.75px;line-height:9.75px;color:#4c607a;font-weight:400;">Type</div>
<div class="t" style="left:953px;transform:scaleX(0.8000);transform-origin:0 50%;top:284.45px;font-size:9.75px;line-height:9.75px;color:#4c607a;font-weight:400;">Size</div>
<div class="r" style="left:593px;top:372.2px;width:426px;height:27.19999999999999px;background:#d9484c;"></div>
<div class="r" style="left:598.3px;top:377.5px;width:415.70000000000005px;height:16.5px;background:#fff;"></div>
<svg class="r" style="left:604px;top:304.5px;" width="11" height="9" viewBox="0 0 11 9"><path d="M0 1.5 H4 L5 2.5 H11 V9.5 H0Z" fill="#f0b830"/><rect x="0" y="3.5" width="11" height="6" fill="#fcd460"/></svg>
<div class="t" style="left:617.5px;transform:scaleX(0.8000);transform-origin:0 50%;top:305.25px;font-size:9.75px;line-height:9.75px;color:#1a1a1a;font-weight:400;">NinjaTrader 8</div>
<div class="t" style="left:777.3px;transform:scaleX(0.8000);transform-origin:0 50%;top:305.25px;font-size:9.75px;line-height:9.75px;color:#5f5f5f;font-weight:400;">8/27/2025 11:53 AM</div>
<div class="t" style="left:873.3px;transform:scaleX(0.8000);transform-origin:0 50%;top:305.25px;font-size:9.75px;line-height:9.75px;color:#5f5f5f;font-weight:400;">File folder</div>
<svg class="r" style="left:604px;top:323.2px;" width="11" height="9" viewBox="0 0 11 9"><path d="M0 1.5 H4 L5 2.5 H11 V9.5 H0Z" fill="#f0b830"/><rect x="0" y="3.5" width="11" height="6" fill="#fcd460"/></svg>
<div class="t" style="left:617.5px;transform:scaleX(0.8000);transform-origin:0 50%;top:323.95px;font-size:9.75px;line-height:9.75px;color:#1a1a1a;font-weight:400;">NinjaTrader 8 Backup</div>
<div class="t" style="left:777.3px;transform:scaleX(0.8000);transform-origin:0 50%;top:323.95px;font-size:9.75px;line-height:9.75px;color:#5f5f5f;font-weight:400;">8/27/2025 11:53 AM</div>
<div class="t" style="left:873.3px;transform:scaleX(0.8000);transform-origin:0 50%;top:323.95px;font-size:9.75px;line-height:9.75px;color:#5f5f5f;font-weight:400;">File folder</div>
<svg class="r" style="left:604px;top:341.8px;" width="11" height="9" viewBox="0 0 11 9"><path d="M0 1.5 H4 L5 2.5 H11 V9.5 H0Z" fill="#f0b830"/><rect x="0" y="3.5" width="11" height="6" fill="#fcd460"/></svg>
<div class="t" style="left:617.5px;transform:scaleX(0.8000);transform-origin:0 50%;top:342.55px;font-size:9.75px;line-height:9.75px;color:#1a1a1a;font-weight:400;">TradeStation 10.0</div>
<div class="t" style="left:777.3px;transform:scaleX(0.8000);transform-origin:0 50%;top:342.55px;font-size:9.75px;line-height:9.75px;color:#5f5f5f;font-weight:400;">8/27/2025 11:08 AM</div>
<div class="t" style="left:873.3px;transform:scaleX(0.8000);transform-origin:0 50%;top:342.55px;font-size:9.75px;line-height:9.75px;color:#5f5f5f;font-weight:400;">File folder</div>
<svg class="r" style="left:604px;top:360.4px;" width="11" height="9" viewBox="0 0 11 9"><path d="M0 1.5 H4 L5 2.5 H11 V9.5 H0Z" fill="#f0b830"/><rect x="0" y="3.5" width="11" height="6" fill="#fcd460"/></svg>
<div class="t" style="left:617.5px;transform:scaleX(0.8000);transform-origin:0 50%;top:361.15px;font-size:9.75px;line-height:9.75px;color:#1a1a1a;font-weight:400;">WindowsPowerShell</div>
<div class="t" style="left:777.3px;transform:scaleX(0.8000);transform-origin:0 50%;top:361.15px;font-size:9.75px;line-height:9.75px;color:#5f5f5f;font-weight:400;">2/7/2025 3:38 PM</div>
<div class="t" style="left:873.3px;transform:scaleX(0.8000);transform-origin:0 50%;top:361.15px;font-size:9.75px;line-height:9.75px;color:#5f5f5f;font-weight:400;">File folder</div>
<svg class="r" style="left:604px;top:378px;" width="11" height="11" viewBox="0 0 11 11"><rect x="0.5" y="0.5" width="8" height="6.5" fill="#c8d8f0" stroke="#9aa8b8" stroke-width="0.6"/>
<path d="M1 1 H5 L3.5 7 H1Z" fill="#1030d0"/><rect x="1" y="1" width="3.5" height="4" fill="#1a28c8"/>
<circle cx="7.3" cy="7.6" r="3.1" fill="#f0f0f0" stroke="#888" stroke-width="0.8"/><path d="M5.8 8.6 L8.8 6.6" stroke="#2a9a2a" stroke-width="1.4"/></svg>
<div class="t" style="left:617.5px;transform:scaleX(0.8000);transform-origin:0 50%;top:379.75px;font-size:9.75px;line-height:9.75px;color:#1a1a1a;font-weight:400;">ChartVPSconnection</div>
<div class="t" style="left:777.3px;transform:scaleX(0.8000);transform-origin:0 50%;top:379.75px;font-size:9.75px;line-height:9.75px;color:#5f5f5f;font-weight:400;">9/22/2025 12:06 PM</div>
<div class="t" style="left:873.3px;transform:scaleX(0.8000);transform-origin:0 50%;top:379.75px;font-size:9.75px;line-height:9.75px;color:#5f5f5f;font-weight:400;">Remote Desktop ...</div>
<div class="t" style="right:282.70000000000005px;transform:scaleX(0.8000);transform-origin:100% 50%;top:379.75px;font-size:9.75px;line-height:9.75px;color:#5f5f5f;font-weight:400;">3 KB</div>
<div class="r" style="left:487px;top:503px;width:626px;height:53px;background:#f0f0f0;"></div>
<div class="t" style="left:572px;transform:scaleX(0.8000);transform-origin:0 50%;top:512.95px;font-size:9.75px;line-height:9.75px;color:#1a1a1a;font-weight:400;">File name:</div>
<div class="r" style="left:611px;top:509.3px;width:359px;height:16.499999999999943px;background:#fff;border:1px solid #4a98e4;border-bottom:2px solid #3a8ae0;border-radius:2px;"></div>
<div class="r" style="left:613.7px;top:513px;width:56px;height:9px;background:#0a64d2;overflow:hidden"><div class="t" style="left:-3.2px;top:-1px;font-size:9.75px;line-height:9.75px;color:#fff;transform:scaleX(0.8);transform-origin:0 50%">rtVPSconnection</div></div>
<svg class="r" style="left:960px;top:515px;" width="7" height="5" viewBox="0 0 7 5"><path d="M0.5 0.5 L3.5 3.5 L6.5 0.5" stroke="#606060" stroke-width="0.9" fill="none"/></svg>
<div class="r" style="left:978px;top:509px;width:125.5px;height:15.799999999999955px;background:#fdfdfd;border:1px solid #dcdcdc;border-radius:2px;"></div>
<div class="t" style="left:980.8px;transform:scaleX(0.8000);transform-origin:0 50%;top:512.75px;font-size:9.75px;line-height:9.75px;color:#1a1a1a;font-weight:400;">Remote Desktop Files (*.RDP)</div>
<svg class="r" style="left:1094px;top:515px;" width="7" height="5" viewBox="0 0 7 5"><path d="M0.5 0.5 L3.5 3.5 L6.5 0.5" stroke="#606060" stroke-width="0.9" fill="none"/></svg>
<div class="r" style="left:978.5px;top:529.3px;width:57.5px;height:16.300000000000068px;background:#fdfdfd;border:1.5px solid #3a8ae0;border-radius:2.5px;"></div>
<div class="t" style="left:1002.5px;transform:translateX(-50%) scaleX(0.8000);transform-origin:50% 50%;top:533.05px;font-size:9.75px;line-height:9.75px;color:#1a1a1a;font-weight:400;">Open</div>
<div class="r" style="left:1026.2px;top:532px;width:1.0px;height:11.5px;background:#1a1a1a;"></div>
<svg class="r" style="left:1028.5px;top:535.5px;" width="6" height="4" viewBox="0 0 6 4"><path d="M0 0 H5.5 L2.75 3.5Z" fill="#1a1a1a"/></svg>
<div class="r" style="left:1045.5px;top:529.5px;width:57.0px;height:16.0px;background:#fdfdfd;border:1px solid #d4d4d4;border-radius:2.5px;"></div>
<div class="t" style="left:1074px;transform:translateX(-50%) scaleX(0.8000);transform-origin:50% 50%;top:533.05px;font-size:9.75px;line-height:9.75px;color:#1a1a1a;font-weight:400;">Cancel</div>
<svg class="r" style="left:1106px;top:549px;" width="8" height="8" viewBox="0 0 8 8"><g fill="#a0a0a0"><rect x="6" y="0" width="1" height="1"/><rect x="4" y="2" width="1" height="1"/><rect x="6" y="2" width="1" height="1"/><rect x="2" y="4" width="1" height="1"/><rect x="4" y="4" width="1" height="1"/><rect x="6" y="4" width="1" height="1"/></g></svg>
<div class="r" style="left:0px;top:688px;width:1280px;height:32px;background:#eeeeee;border-top:1px solid #dcdcdc;"></div>
<svg class="r" style="left:469.5px;top:696px;" width="17" height="16" viewBox="0 0 17 16"><defs><linearGradient id="gwin" x1="0" y1="0" x2="1" y2="1"><stop offset="0" stop-color="#48c0f8"/><stop offset="1" stop-color="#0a6ed8"/></linearGradient></defs>
<rect x="0" y="0" width="7.7" height="7.5" fill="url(#gwin)"/><rect x="8.6" y="0" width="7.7" height="7.5" fill="url(#gwin)"/>
<rect x="0" y="8.3" width="7.7" height="7.5" fill="url(#gwin)"/><rect x="8.6" y="8.3" width="7.7" height="7.5" fill="url(#gwin)"/></svg>
<div class="r" style="left:494.5px;top:693.6px;width:145.0px;height:21.0px;background:#fafafa;border:1px solid #e2e2e2;border-radius:10.5px;"></div>
<svg class="r" style="left:501px;top:699px;" width="11" height="11" viewBox="0 0 11 11"><circle cx="4.5" cy="4.5" r="3.6" stroke="#1a1a1a" stroke-width="1.2" fill="none"/><path d="M7.2 7.2 L10.3 10.3" stroke="#1a1a1a" stroke-width="1.3"/></svg>
<div class="t" style="left:518.5px;transform:scaleX(0.8000);transform-origin:0 50%;top:699.52px;font-size:10.38px;line-height:10.38px;color:#5a5a5a;font-weight:400;">Search</div>
<svg class="r" style="left:647px;top:696px;" width="18" height="17" viewBox="0 0 18 17"><rect x="6" y="1.5" width="10.5" height="10" fill="#f6f6f6" stroke="#d8d8d8" stroke-width="0.6"/><rect x="1" y="5" width="12" height="11" rx="1" fill="#1a1a1a"/><rect x="4.5" y="5" width="8.5" height="7.5" fill="#b4b4b4"/></svg>
<svg class="r" style="left:677px;top:695px;" width="18" height="17" viewBox="0 0 18 17"><path d="M0.5 2 H7 L8.5 3.5 H17.5 V16 H0.5Z" fill="#f0b020"/><rect x="0.5" y="5" width="17" height="11" fill="#fcd050"/><rect x="4" y="10.5" width="10" height="4" fill="#1a78d8"/></svg>
<svg class="r" style="left:706.5px;top:695.5px;" width="17.5" height="17" viewBox="0 0 17.5 17"><rect width="17.5" height="17" fill="#b3292b"/><path d="M1.5 8.5 C1.5 -0.5 8.5 -0.5 8.75 8.5 C9 17.5 16 17.5 16 8.5" stroke="#fff" stroke-width="1.6" fill="none"/><line x1="0" y1="8.5" x2="17.5" y2="8.5" stroke="#fff" stroke-width="0.9"/></svg>
<div class="r" style="left:732px;top:692px;width:25.5px;height:24px;background:#f8f8f8;border:1px solid #e4e4e4;border-radius:3px;"></div>
<svg class="r" style="left:736px;top:695px;" width="17" height="17" viewBox="0 0 17 17"><path d="M1 1 L13 2 L12.5 11 L0.5 10Z" fill="#dde2e8" stroke="#9aa8b8" stroke-width="0.6"/>
<path d="M2 2.2 L7.5 2.6 L7 9.8 L1.6 9.3Z" fill="#1a30d0"/><path d="M7.5 2.6 L12 3 L11.6 10 L7 9.8Z" fill="#b8c8f8"/>
<ellipse cx="6" cy="13.5" rx="4" ry="1.5" fill="#d0d4d8"/>
<circle cx="12" cy="12" r="4.3" fill="#f0f0f0" stroke="#909090" stroke-width="0.8"/><path d="M10 13 L14 11" stroke="#2a9a2a" stroke-width="1.4"/></svg>
<div class="r" style="left:739.5px;top:714.5px;width:10.0px;height:2.0px;background:#0067c0;border-radius:1px;"></div>
<svg class="r" style="left:765px;top:695px;" width="18" height="18" viewBox="0 0 18 18"><path d="M2 4 L13 2 L16 15 L5 17Z" fill="#9ed8f0" stroke="#5aa8cc" stroke-width="0.6"/><path d="M3.5 5 L12.5 3.3 L15 14.5 L6 16Z" fill="#d4f0fc"/><path d="M2 4 L13 2 L13.4 3.8 L2.4 5.8Z" fill="#4a90c0"/><path d="M13 2 L16 15 L17 14.5 L14 1.5Z" fill="#b8a890"/></svg>
<div class="r" style="left:772.5px;top:715px;width:4.0px;height:1.2000000000000455px;background:#707070;border-radius:1px;"></div>
<svg class="r" style="left:794.5px;top:695.5px;" width="17.5" height="16" viewBox="0 0 17.5 16"><rect x="0.5" y="0.5" width="16.5" height="15" rx="1.5" fill="#2c2c2c" stroke="#505050" stroke-width="0.6"/><path d="M3.5 5 L6.5 7.5 L3.5 10" stroke="#fff" stroke-width="1.1" fill="none"/><rect x="7.5" y="10" width="5" height="1.1" fill="#fff"/></svg>
<div class="r" style="left:801px;top:715px;width:4px;height:1.2000000000000455px;background:#707070;border-radius:1px;"></div>
<svg class="r" style="left:1143px;top:701px;" width="9" height="6" viewBox="0 0 9 6"><path d="M0.8 5 L4.5 1.2 L8.2 5" stroke="#1a1a1a" stroke-width="1.1" fill="none"/></svg>
<div class="t" style="left:1172.6px;transform:translateX(-50%) scaleX(0.8000);transform-origin:50% 50%;top:695.49px;font-size:8.75px;line-height:8.75px;color:#1a1a1a;font-weight:400;">ENG</div>
<div class="t" style="left:1172.6px;transform:translateX(-50%) scaleX(0.8000);transform-origin:50% 50%;top:706.09px;font-size:8.75px;line-height:8.75px;color:#1a1a1a;font-weight:400;">US</div>
<svg class="r" style="left:1191px;top:698px;" width="14" height="12" viewBox="0 0 14 12"><rect x="0.6" y="0.6" width="9" height="8" rx="1" stroke="#1a1a1a" stroke-width="1" fill="none"/><path d="M3 9 V11 H8" stroke="#1a1a1a" stroke-width="0.9" fill="none"/><path d="M11.5 1 V8" stroke="#1a1a1a" stroke-width="0.9"/><circle cx="11.5" cy="2" r="1.3" fill="#eee" stroke="#1a1a1a" stroke-width="0.8"/></svg>
<svg class="r" style="left:1208px;top:699px;" width="12" height="10" viewBox="0 0 12 10"><path d="M0.6 3.2 H2.8 L5.2 1 V9 L2.8 6.8 H0.6Z" stroke="#1a1a1a" stroke-width="0.9" fill="none"/><path d="M7 3 Q8 5 7 7 M8.7 2 Q10.2 5 8.7 8 M10.4 1 Q12.2 5 10.4 9" stroke="#1a1a1a" stroke-width="0.8" fill="none"/></svg>
<div class="t" style="right:13.299999999999955px;transform:scaleX(0.8000);transform-origin:100% 50%;top:693.84px;font-size:9.88px;line-height:9.88px;color:#1a1a1a;font-weight:400;">12:06 PM</div>
<div class="t" style="right:13.299999999999955px;transform:scaleX(0.8000);transform-origin:100% 50%;top:704.84px;font-size:9.88px;line-height:9.88px;color:#1a1a1a;font-weight:400;">9/22/2025</div>
</body></html>
